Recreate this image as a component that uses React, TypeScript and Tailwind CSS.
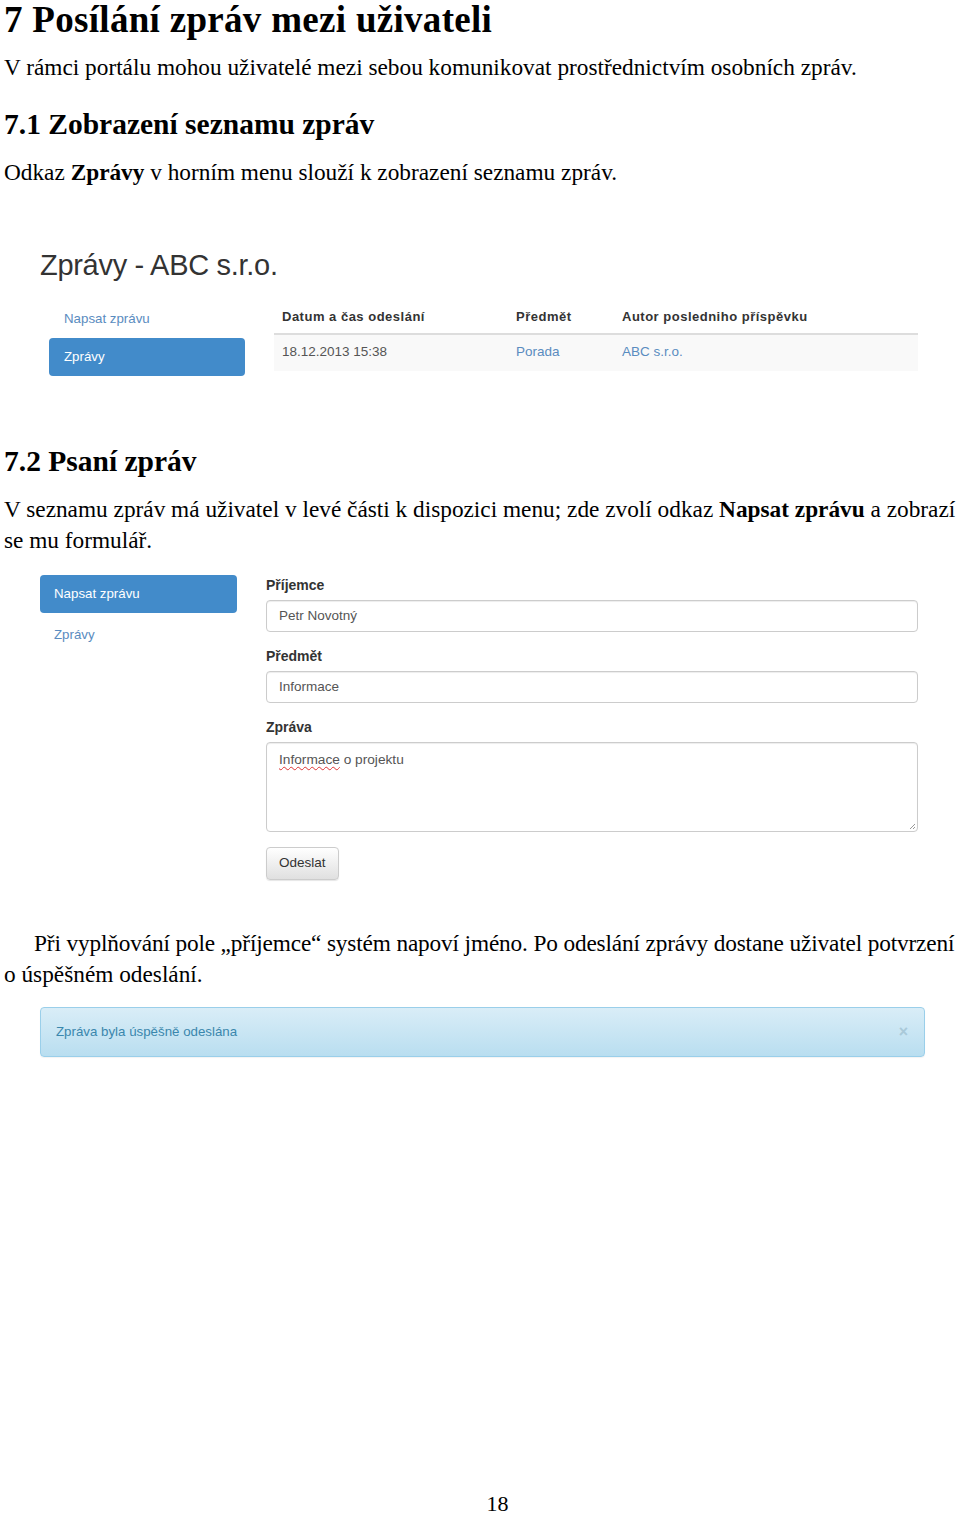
import React from 'react';

const serif = { fontFamily: '"Liberation Serif", "Times New Roman", serif' };
const sans = { fontFamily: '"Liberation Sans", Arial, sans-serif' };

const MessageList: React.FC = () => (
    <div className="pl-[40px] pr-[42px]" style={sans}>
        <h3 className="text-[29px] leading-none text-[#333] tracking-[-0.3px]">Zprávy - ABC s.r.o.</h3>
        <div className="mt-[21px] flex gap-[29px]">
            {/* Left menu */}
            <div className="w-[196px] ml-[9px] flex flex-col gap-[2px] text-[13.3px]">
                <div className="px-[15px] py-[8px] text-[#5a8cc0]">Napsat zprávu</div>
                <div className="px-[15px] h-[38px] flex items-center rounded-[4px] bg-[#428bca] text-white">Zprávy</div>
            </div>
            {/* Table */}
            <div className="flex-1">
                <div className="flex h-[34px] items-center border-b-2 border-[#ddd] font-bold text-[13px] tracking-[0.5px] text-[#333]">
                    <div className="w-[242px] pl-[8px]">Datum a čas odeslání</div>
                    <div className="w-[106px]">Předmět</div>
                    <div className="flex-1">Autor posledniho příspěvku</div>
                </div>
                <div className="flex h-[36px] items-center bg-[#f9f9f9] text-[13.5px] text-[#555]">
                    <div className="w-[242px] pl-[8px]">18.12.2013 15:38</div>
                    <div className="w-[106px] text-[#5a8cc0]">Porada</div>
                    <div className="flex-1 text-[#5a8cc0]">ABC s.r.o.</div>
                </div>
            </div>
        </div>
    </div>
);

const Label: React.FC<{ children: React.ReactNode }> = ({ children }) => (
    <div className="text-[14px] font-bold text-[#333] h-[20px] leading-[20px] mb-[5px]">{children}</div>
);

const Field: React.FC<{ label: string; value: string }> = ({ label, value }) => (
    <div>
        <Label>{label}</Label>
        <div className="h-[32px] border border-[#ccc] rounded-[4px] flex items-center px-[12px] text-[13.5px] text-[#555] shadow-[inset_0_1px_1px_rgba(0,0,0,0.075)]">
            {value}
        </div>
    </div>
);

const ComposeForm: React.FC = () => (
    <div className="flex pl-[40px] pr-[42px]" style={sans}>
        <div className="w-[197px] flex flex-col gap-[4px] text-[13.3px]">
            <div className="px-[14px] h-[38px] flex items-center rounded-[4px] bg-[#428bca] text-white">Napsat zprávu</div>
            <div className="px-[14px] py-[8px] text-[#5a8cc0]">Zprávy</div>
        </div>
        <div className="flex-1 ml-[29px] flex flex-col gap-[14px]">
            <Field label="Příjemce" value="Petr Novotný" />
            <Field label="Předmět" value="Informace" />
            <div>
                <Label>Zpráva</Label>
                <div className="relative h-[90px] border border-[#ccc] rounded-[4px] px-[12px] pt-[7px] text-[13.7px] text-[#555] shadow-[inset_0_1px_1px_rgba(0,0,0,0.075)]">
                    <span className="underline decoration-wavy decoration-[#d33] decoration-1 underline-offset-2">Informace</span> o projektu
                    <svg className="absolute right-[1px] bottom-[1px]" width="7" height="7" viewBox="0 0 7 7">
                        <path d="M6 1 L1 6 M6 4 L4 6" stroke="#999" strokeWidth="1" />
                    </svg>
                </div>
            </div>
            <div className="mt-[1px]">
                <div className="inline-flex items-center h-[33px] px-[12px] rounded-[4px] border border-[#ccc] bg-gradient-to-b from-white to-[#e0e0e0] text-[13.5px] text-[#333] shadow-[0_1px_1px_rgba(0,0,0,0.1)]">
                    Odeslat
                </div>
            </div>
        </div>
    </div>
);

export default function App() {
    return (
        <div className="w-[960px] h-[1515px] bg-white text-black relative overflow-hidden" style={serif}>
            <div className="pl-[4px]">
                <h1 className="text-[37px] font-bold leading-[40px] tracking-[0.3px]">7 Posílání zpráv mezi uživateli</h1>
                <p className="text-[23.3px] leading-[31px] mt-[12px]">
                    V rámci portálu mohou uživatelé mezi sebou komunikovat prostřednictvím osobních zpráv.
                </p>
                <h2 className="text-[29.5px] font-bold leading-none mt-[27px]">7.1 Zobrazení seznamu zpráv</h2>
                <p className="text-[23.3px] leading-[31px] mt-[17px]">
                    Odkaz <b>Zprávy</b> v horním menu slouží k zobrazení seznamu zpráv.
                </p>
            </div>

            <div className="mt-[63px]">
                <MessageList />
            </div>

            <div className="pl-[4px] mt-[71px]">
                <h2 className="text-[29.5px] font-bold leading-none">7.2 Psaní zpráv</h2>
                <p className="text-[23.3px] leading-[31px] mt-[17px] whitespace-nowrap">
                    V seznamu zpráv má uživatel v levé části k dispozici menu; zde zvolí odkaz <b>Napsat zprávu</b> a zobrazí
                </p>
                <p className="text-[23.3px] leading-[31px]">se mu formulář.</p>
            </div>

            <div className="mt-[19px]">
                <ComposeForm />
            </div>

            <div className="pl-[4px] mt-[48px]">
                <p className="text-[23.3px] leading-[31px] whitespace-nowrap tracking-[-0.15px]">
                    <span className="inline-block w-[30px]" />Při vyplňování pole „příjemce“ systém napoví jméno. Po odeslání zprávy dostane uživatel potvrzení
                </p>
                <p className="text-[23.3px] leading-[31px]">o úspěšném odeslání.</p>
            </div>

            <div className="mt-[17px] pl-[40px] pr-[35px]" style={sans}>
                <div className="h-[50px] flex items-center justify-between px-[15px] rounded-[4px] border border-[#9acfea] bg-gradient-to-b from-[#d9edf7] to-[#b9def0] text-[13.3px] text-[#3a87ad] shadow-[0_1px_1px_rgba(0,0,0,0.05)]">
                    <span>Zpráva byla úspěšně odeslána</span>
                    <span className="text-[16px] text-[#a9c9d9] font-bold pr-[1px]">×</span>
                </div>
            </div>

            <div className="absolute left-0 right-0 top-[1490px] text-center text-[22px] leading-[28px]">
                <span className="ml-[35px]">18</span>
            </div>
        </div>
    );
}
